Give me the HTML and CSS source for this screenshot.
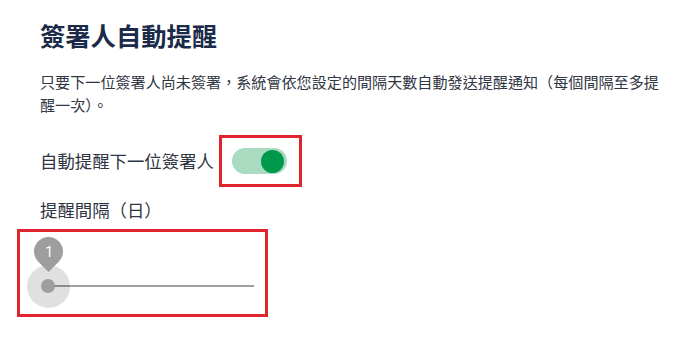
FILE: index.html
```html
<!DOCTYPE html>
<html lang="zh-Hant">
<head>
<meta charset="utf-8">
<link rel="stylesheet" href="styles.css">
</head>
<body>
<div class="page">
  <h1 class="title">簽署人自動提醒</h1>
  <p class="desc">只要下一位簽署人尚未簽署，系統會依您設定的間隔天數自動發送提醒通知（每個間隔至多提醒一次）。</p>
  <div class="toggle-row">
    <span class="label">自動提醒下一位簽署人</span>
    <div class="mark toggle-box">
      <div class="switch"><span class="knob"></span></div>
    </div>
  </div>
  <div class="label interval-label">提醒間隔（日）</div>
  <div class="mark slider-box">
    <div class="slider">
      <span class="halo"></span>
      <span class="thumb"></span>
      <span class="value"><span class="value-text">1</span></span>
    </div>
  </div>
</div>
</body>
</html>
```

FILE: styles.css
```css
html, body {
  margin: 0;
  padding: 0;
  background: #ffffff;
}
.page {
  padding: 20px 0 0 40px;
  font-family: "Noto Sans CJK TC", "Noto Sans", sans-serif;
  color: #2e3440;
}
.title {
  margin: 0;
  font-size: 25.3px;
  line-height: 30px;
  font-weight: 700;
  color: #1b2a48;
}
.desc {
  margin: 20px 0 0 0;
  width: 624px;
  font-size: 15.1px;
  line-height: 23px;
  color: #2f3542;
}
.toggle-row {
  display: flex;
  align-items: center;
  margin-top: 19px;
}
.label {
  font-size: 17.4px;
  line-height: 24px;
  color: #2f3542;
}
.mark {
  border: 3px solid #e0252f;
  box-sizing: border-box;
}
.toggle-box {
  margin-left: 5px;
  width: 83px;
  height: 52px;
  display: flex;
  align-items: center;
  padding-left: 10px;
}
.switch {
  width: 55px;
  height: 26px;
  border-radius: 13px;
  background: #a9dbc1;
  position: relative;
}
.knob {
  position: absolute;
  right: 3px;
  top: 1.5px;
  width: 23px;
  height: 23px;
  border-radius: 50%;
  background: #00984a;
}
.interval-label {
  margin-top: 11px;
}
.slider-box {
  margin-top: 7px;
  margin-left: -23px;
  width: 251px;
  height: 88px;
  padding-top: 53px;
}
.slider {
  position: relative;
  margin-left: 28px;
  width: 206px;
  height: 2px;
  background: #a0a0a0;
}
.halo {
  position: absolute;
  left: -21.5px;
  top: -20.5px;
  width: 43px;
  height: 43px;
  border-radius: 50%;
  background: rgba(0, 0, 0, 0.12);
}
.thumb {
  position: absolute;
  left: -7px;
  top: -6px;
  width: 14px;
  height: 14px;
  border-radius: 50%;
  background: #9e9e9e;
}
.value {
  position: absolute;
  left: -14.5px;
  top: -48px;
  width: 29px;
  height: 29px;
  border-radius: 50% 50% 50% 0;
  background: #9e9e9e;
  transform: rotate(-45deg);
  display: flex;
  align-items: center;
  justify-content: center;
}
.value-text {
  transform: rotate(45deg);
  color: #ffffff;
  font-family: Roboto, "Liberation Sans", sans-serif;
  font-size: 14px;
  line-height: 1;
}
```
